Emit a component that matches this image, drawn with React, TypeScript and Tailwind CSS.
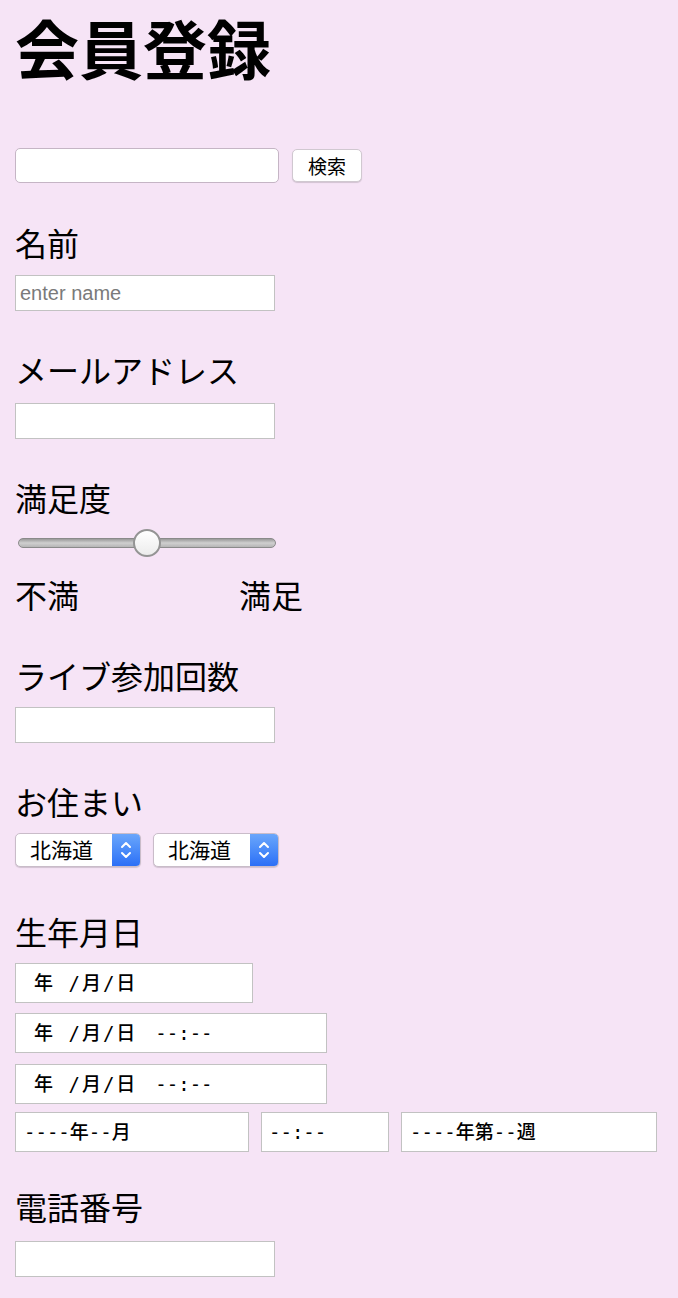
import React from 'react';

const Label = ({ text, className = '' }: { text: string; className?: string }) => (
  <div className={`text-[32px] leading-[40px] ${className}`}>{text}</div>
);

const TextBox = ({ className = '', placeholder }: { className?: string; placeholder?: string }) => (
  <input
    type="text"
    placeholder={placeholder}
    className={`block w-[260px] h-[36px] bg-white border border-[#c2c2c2] px-[4px] text-[20px] font-['Liberation_Sans',sans-serif] placeholder:text-[#7a7a7a] outline-none ${className}`}
  />
);

const DateBox = ({ children, className = '' }: { children: React.ReactNode; className?: string }) => (
  <div
    className={`flex items-center h-[40px] bg-white border border-[#c2c2c2] text-[19px] font-medium font-['DejaVu_Sans_Mono','Noto_Sans_CJK_JP',monospace] whitespace-pre ${className}`}
  >
    {children}
  </div>
);

const Select = () => (
  <div className="flex h-[34px] w-[126px] rounded-[5px] overflow-hidden border border-[#c9bcc9] shadow-[0_1px_1px_rgba(0,0,0,0.15)] bg-white">
    <div className="flex-1 flex items-center pl-[14px] text-[21px]">北海道</div>
    <div className="w-[28px] flex items-center justify-center bg-gradient-to-b from-[#6aa6fb] to-[#2c6ff6]">
      <svg width="14" height="22" viewBox="0 0 14 22" fill="none" stroke="white" strokeWidth="2" strokeLinecap="round" strokeLinejoin="round">
        <path d="M3 8l4-4 4 4" />
        <path d="M3 14l4 4 4-4" />
      </svg>
    </div>
  </div>
);

export default function App() {
  return (
    <div className="min-h-[1298px] bg-[#f6e4f6] pl-[15px] pb-[20px] text-black font-['Noto_Sans_CJK_JP',sans-serif]">
      <h1 className="pt-[6px] text-[64px] leading-[80px] font-bold">会員登録</h1>

      <div className="mt-[62px] flex items-center gap-[13px]">
        <input
          type="text"
          className="w-[264px] h-[35px] bg-white border border-[#c5b5c5] rounded-[5px] outline-none"
        />
        <button className="w-[70px] h-[33px] bg-white border border-[#d0c8d0] rounded-[5px] shadow-[0_1px_1px_rgba(0,0,0,0.15)] text-[19px] leading-none">
          検索
        </button>
      </div>

      <Label text="名前" className="mt-[39px]" />
      <TextBox className="mt-[13px]" placeholder="enter name" />

      <Label text="メールアドレス" className="mt-[38px]" />
      <TextBox className="mt-[14px]" />

      <Label text="満足度" className="mt-[38px]" />
      <div className="mt-[12px] relative w-[262px] h-[28px] ml-[1px]">
        <div className="absolute left-[2px] right-[2px] top-[9px] h-[10px] rounded-full border border-[#8a8a8a] bg-gradient-to-b from-[#9a9a9a] via-[#cfcfcf] to-[#b5b5b5]" />
        <div className="absolute left-[117px] top-0 w-[28px] h-[28px] rounded-full border-2 border-[#949494] bg-gradient-to-b from-[#ffffff] to-[#ececec]" />
      </div>
      <div className="mt-[17px] text-[32px] leading-[40px] whitespace-pre">不満　　　　　満足</div>

      <Label text="ライブ参加回数" className="mt-[41px]" />
      <TextBox className="mt-[12px]" />

      <Label text="お住まい" className="mt-[38px]" />
      <div className="mt-[12px] flex gap-[12px]">
        <Select />
        <Select />
      </div>

      <Label text="生年月日" className="mt-[44px]" />
      <DateBox className="mt-[12px] w-[238px] pl-[18px]">
        <span className="tracking-[2px]">年 /月/日</span>
      </DateBox>
      <DateBox className="mt-[10px] h-[39px] w-[312px] pl-[18px]">
        <span className="tracking-[2px]">年 /月/日</span>
        <span className="ml-[18px]">--:--</span>
      </DateBox>
      <DateBox className="mt-[11px] h-[39px] w-[312px] pl-[18px]">
        <span className="tracking-[2px]">年 /月/日</span>
        <span className="ml-[18px]">--:--</span>
      </DateBox>
      <div className="mt-[8px] flex gap-[12px]">
        <DateBox className="w-[234px] pl-[8px]">----年--月</DateBox>
        <DateBox className="w-[128px] pl-[7px]">--:--</DateBox>
        <DateBox className="w-[256px] pl-[8px]">----年第--週</DateBox>
      </div>

      <Label text="電話番号" className="mt-[34px]" />
      <TextBox className="mt-[15px]" />
    </div>
  );
}
